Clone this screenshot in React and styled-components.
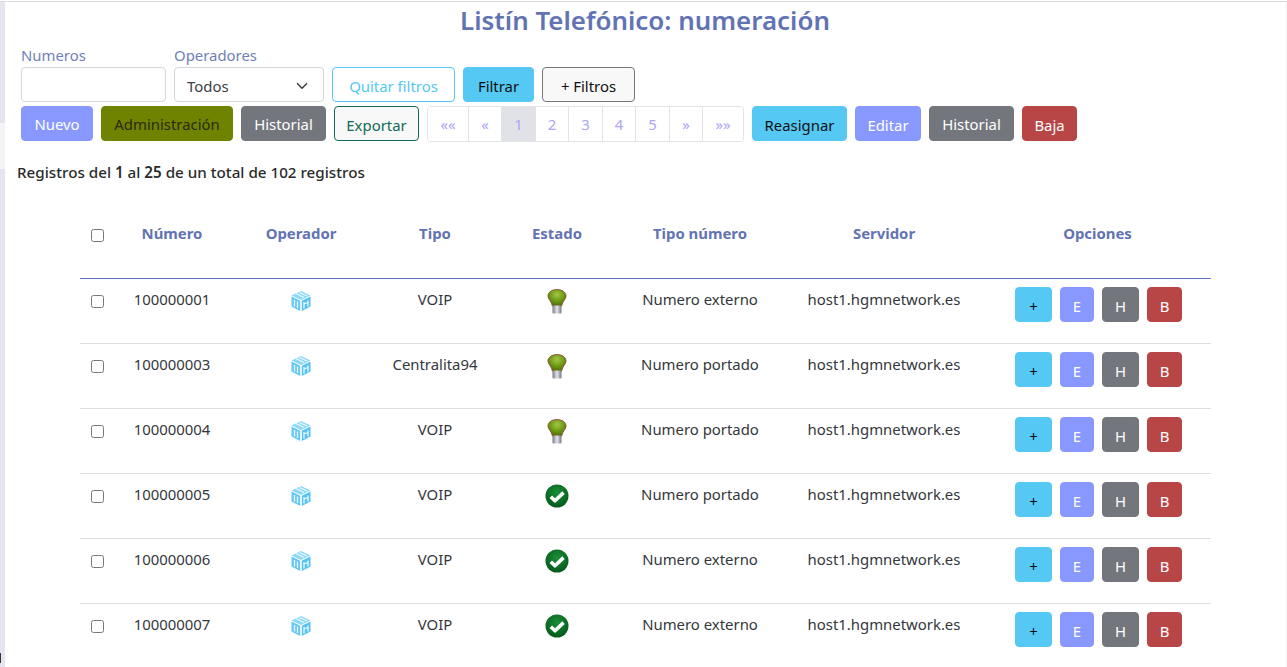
import React from 'react'
import styled, { createGlobalStyle } from 'styled-components'

const GlobalStyle = createGlobalStyle`
    html, body {
        margin: 0;
        padding: 0;
        height: 667px;
        overflow: hidden;
        background: #fff;
        font-family: "Noto Sans", "Open Sans", sans-serif;
        color: #212529;
    }
    * { box-sizing: border-box; }
`
const palette = {
    info: '#55c8f3',
    primary: '#8898ff',
    secondary: '#73767d',
    danger: '#b94646',
    olive: '#708300',
}
const Page = styled.div`
    display: flex;
    height: 666px;
    margin-top: 1px;
    border-top: 1px solid #dcdcdc;
    overflow: hidden;
`
const Rail = styled.div`
    position: relative;
    flex: 0 0 5px;
    background: linear-gradient(#e6e5ef 0 121px, #f5f5f7 121px 167px, #e6e5ef 167px);
    &::after {
        content: '';
        position: absolute;
        left: 0;
        top: 651px;
        width: 1px;
        height: 10px;
        background: #333;
    }
`
const Main = styled.main`
    flex: 1;
    min-width: 0;
    padding-right: 2px;
    border-right: 1px solid #f0f0f0;
`
const Title = styled.h1`
    margin: 0;
    height: 39px;
    text-align: center;
    font-size: 25.9px;
    line-height: 37px;
    font-weight: 600;
    color: #6273b4;
    width: 1280px;
`
const FilterRow = styled.div`
    display: flex;
    align-items: flex-end;
    gap: 8px;
    margin-left: 16px;
    height: 61px;
`
const Field = styled.label`
    display: flex;
    flex-direction: column;
    font-size: 14.9px;
    line-height: 24px;
    color: #6f7fba;
`
const TextInput = styled.input`
    width: ${p => p.$w}px;
    height: 35px;
    border: 1px solid #d5d7da;
    border-radius: 4px;
    background: #fff;
    outline: none;
`
const FakeSelect = styled.div`
    display: flex;
    align-items: center;
    justify-content: space-between;
    width: 150px;
    height: 35px;
    padding: 2px 15px 0 12px;
    border: 1px solid #d5d7da;
    border-radius: 4px;
    background: #fff;
    font-size: 14.9px;
    color: #3c4046;
`
const Button = styled.button`
    flex: none;
    width: ${p => p.$w}px;
    height: 35px;
    padding: ${p => p.$pad ?? 3}px 0 0;
    border-radius: 4px;
    border: 1px solid ${p => p.$border || p.$bg || 'transparent'};
    background: ${p => p.$bg || '#f8f8f8'};
    color: ${p => p.$color || '#fff'};
    font-family: inherit;
    font-size: 14.9px;
    line-height: 1;
`
const ToolRow = styled.div`
    display: flex;
    align-items: flex-start;
    gap: 8px;
    margin: 4px 0 0 16px;
    height: 36px;
`
const Pager = styled.div`
    display: flex;
    flex: none;
    height: 36px;
    border: 1px solid #e2e3e8;
    border-radius: 4px;
    overflow: hidden;
`
const PagerCell = styled.span`
    display: flex;
    align-items: center;
    justify-content: center;
    width: ${p => p.$w}px;
    border-left: ${p => (p.$first ? 'none' : '1px solid #e2e3e8')};
    background: ${p => (p.$active ? '#e1e2e7' : '#fff')};
    color: #aba6f5;
    font-size: 14.9px;
`
const Summary = styled.p`
    margin: 20px 0 0 12px;
    height: 20px;
    font-size: 15.2px;
    line-height: 20px;
    font-weight: 500;
    color: #2b2b2b;
    b { font-weight: 600; }
`
const Table = styled.table`
    width: 1131px;
    margin: 18px 0 0 75px;
    border-collapse: separate;
    border-spacing: 0;
    table-layout: fixed;
    font-size: 14.9px;
    color: #33373c;
`
const HeadCell = styled.th`
    height: 79px;
    padding: 0 0 13px;
    border-bottom: 1px solid #5f74c4;
    text-align: center;
    font-size: 14.9px;
    font-weight: 700;
    color: #6273b4;
`
const Cell = styled.td`
    height: 65px;
    padding: 8px 0 0;
    border-bottom: 1px solid #dfdfdf;
    vertical-align: top;
    text-align: center;
    line-height: 24px;
`
const Check = styled.input.attrs({ type: 'checkbox' })`
    display: block;
    width: 13px;
    height: 13px;
    margin: 8px 0 0 11px;
    appearance: none;
    border: 1px solid #76797c;
    border-radius: 2.5px;
    background: #fff;
`
const HeadCheck = styled(Check)`
    margin-top: 5px;
`
const IconSlot = styled.div`
    display: flex;
    justify-content: center;
    height: 26px;
    margin-top: ${p => p.$top}px;
`
const Options = styled.div`
    display: flex;
    gap: 8px;
    padding-left: 31px;
`

const CubeIcon = () => (
    <svg width="22" height="22" viewBox="0 0 22 22">
        <path d="M11 1 20.500 5.500 11 10 1.500 5.500Z" fill="#8bd9f9" />
        <path d="M1.500 6.500 10.200 10.800V21L1.500 16.500Z" fill="#62c8f5" />
        <path d="M20.500 6.500 11.800 10.800V21L20.500 16.500Z" fill="#55c2f3" />
        <path d="M6 3.500 14 7.500M9.500 2.500 17 6M4.500 10V16.500M7.500 11.500V18M14 12V18.500M18 10.500V16.500M14 14 18 12.500" stroke="#eef9fe" strokeWidth="1.300" fill="none" />
    </svg>
)

const BulbIcon = () => (
    <svg width="20" height="25" viewBox="0 0 20 25">
        <defs>
            <radialGradient id="bulbGlass" cx="0.5" cy="0.3" r="0.65">
                <stop offset="0" stopColor="#a3c64a" />
                <stop offset="0.6" stopColor="#6f9a12" />
                <stop offset="1" stopColor="#55710c" />
            </radialGradient>
            <linearGradient id="bulbBase" x1="0" x2="1" y1="0" y2="0">
                <stop offset="0" stopColor="#77777f" />
                <stop offset="0.5" stopColor="#e6e6ee" />
                <stop offset="1" stopColor="#77777f" />
            </linearGradient>
        </defs>
        <path d="M10 .6C4.600.6 1 3.400 1 7c0 3.600 3.800 5.400 4.400 10h9.200C15.200 12.400 19 10.600 19 7 19 3.400 15.400.6 10 .6Z" fill="url(#bulbGlass)" stroke="#8a5a3c" strokeWidth="1" />
        <rect x="5.500" y="16.500" width="9" height="8" rx="1" fill="url(#bulbBase)" />
    </svg>
)

const CheckIcon = () => (
    <svg width="24" height="24" viewBox="0 0 24 24">
        <defs>
            <radialGradient id="okDisc" cx="0.5" cy="0.35" r="0.7">
                <stop offset="0" stopColor="#1a8f36" />
                <stop offset="1" stopColor="#03551a" />
            </radialGradient>
        </defs>
        <circle cx="12" cy="12" r="11.500" fill="url(#okDisc)" />
        <path d="M5.800 12.800 10 16.800 18.500 8.600" fill="none" stroke="#fff" strokeWidth="3.600" strokeLinejoin="round" />
    </svg>
)

const pages = [
    { label: '««', w: 40 },
    { label: '«', w: 33 },
    { label: '1', w: 34, active: true },
    { label: '2', w: 33 },
    { label: '3', w: 34 },
    { label: '4', w: 33 },
    { label: '5', w: 34 },
    { label: '»', w: 33 },
    { label: '»»', w: 41 },
]

const columns = [
    { key: 'check', w: 34 },
    { key: 'Número', w: 116 },
    { key: 'Operador', w: 142 },
    { key: 'Tipo', w: 126 },
    { key: 'Estado', w: 118 },
    { key: 'Tipo número', w: 168 },
    { key: 'Servidor', w: 200 },
    { key: 'Opciones', w: 227 },
]

const rows = [
    { num: '100000001', tipo: 'VOIP', ok: false, tn: 'Numero externo' },
    { num: '100000003', tipo: 'Centralita94', ok: false, tn: 'Numero portado' },
    { num: '100000004', tipo: 'VOIP', ok: false, tn: 'Numero portado' },
    { num: '100000005', tipo: 'VOIP', ok: true, tn: 'Numero portado' },
    { num: '100000006', tipo: 'VOIP', ok: true, tn: 'Numero externo' },
    { num: '100000007', tipo: 'VOIP', ok: true, tn: 'Numero externo' },
]

const App = () => {
    return (
        <Page>
            <GlobalStyle />
            <Rail />
            <Main>
                <Title>Listín Telefónico: numeración</Title>
                <FilterRow>
                    <Field>
                        Numeros
                        <TextInput $w={145} />
                    </Field>
                    <Field>
                        Operadores
                        <FakeSelect>
                            Todos
                            <svg width="12" height="8" viewBox="0 0 12 8">
                                <path d="M1 1.200 6 6.200 11 1.200" fill="none" stroke="#343a40" strokeWidth="1.400" />
                            </svg>
                        </FakeSelect>
                    </Field>
                    <Button $w={123} $border={palette.info} $bg="#fff" $color={palette.info}>Quitar filtros</Button>
                    <Button $w={71} $bg={palette.info} $color="#111">Filtrar</Button>
                    <Button $w={93} $border="#73767d" $color="#111">+ Filtros</Button>
                </FilterRow>
                <ToolRow>
                    <Button $w={72} $pad={2} $bg={palette.primary}>Nuevo</Button>
                    <Button $w={132} $pad={2} $bg={palette.olive} $color="#2c2a10">Administración</Button>
                    <Button $w={85} $pad={2} $bg={palette.secondary}>Historial</Button>
                    <Button $w={85} $border="#126a57" $color="#126a57">Exportar</Button>
                    <Pager>
                        {pages.map((p, i) => (
                            <PagerCell key={p.label} $w={p.w} $first={i === 0} $active={p.active}>{p.label}</PagerCell>
                        ))}
                    </Pager>
                    <Button $w={95} $bg={palette.info} $color="#111">Reasignar</Button>
                    <Button $w={66} $bg={palette.primary}>Editar</Button>
                    <Button $w={85} $pad={2} $bg={palette.secondary}>Historial</Button>
                    <Button $w={55} $bg={palette.danger}>Baja</Button>
                </ToolRow>
                <Summary>Registros del <b>1</b> al <b>25</b> de un total de 102 registros</Summary>
                <Table>
                    <colgroup>
                        {columns.map(c => <col key={c.key} style={{ width: c.w }} />)}
                    </colgroup>
                    <thead>
                        <tr>
                            <HeadCell><HeadCheck /></HeadCell>
                            {columns.slice(1).map(c => <HeadCell key={c.key}>{c.key}</HeadCell>)}
                        </tr>
                    </thead>
                    <tbody>
                        {rows.map(r => (
                            <tr key={r.num}>
                                <Cell><Check /></Cell>
                                <Cell>{r.num}</Cell>
                                <Cell><IconSlot $top={3}><CubeIcon /></IconSlot></Cell>
                                <Cell>{r.tipo}</Cell>
                                <Cell>
                                    <IconSlot $top={2}>
                                        {r.ok ? <CheckIcon /> : <BulbIcon />}
                                    </IconSlot>
                                </Cell>
                                <Cell>{r.tn}</Cell>
                                <Cell>host1.hgmnetwork.es</Cell>
                                <Cell>
                                    <Options>
                                        <Button $w={37} $pad={4} $bg={palette.info} $color="#111">+</Button>
                                        <Button $w={34} $pad={4} $bg={palette.primary}>E</Button>
                                        <Button $w={37} $pad={4} $bg={palette.secondary}>H</Button>
                                        <Button $w={35} $pad={4} $bg={palette.danger}>B</Button>
                                    </Options>
                                </Cell>
                            </tr>
                        ))}
                    </tbody>
                </Table>
            </Main>
        </Page>
    )
}

export default App
